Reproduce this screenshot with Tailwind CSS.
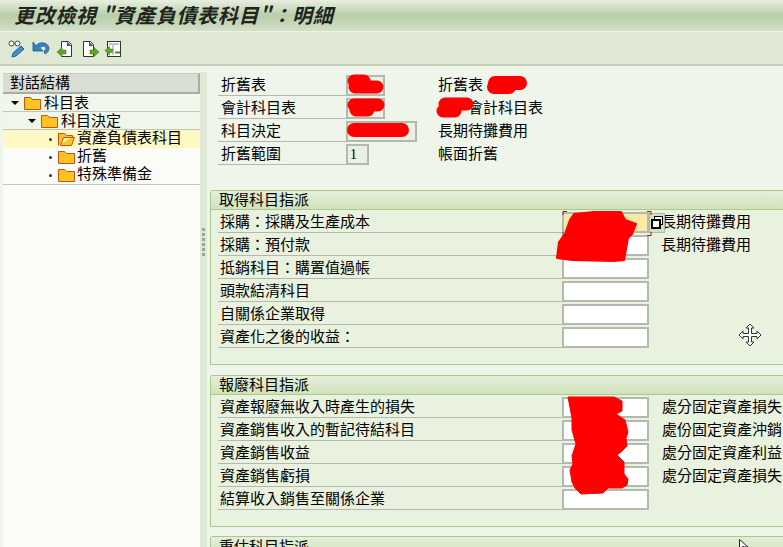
<!DOCTYPE html>
<html lang="zh-Hant">
<head>
  <meta charset="UTF-8" />
  <title>更改檢視</title>
  <script src="https://cdn.jsdelivr.net/npm/@tailwindcss/browser@4"></script>
</head>
<body class="relative w-[783px] h-[547px] overflow-hidden bg-[#eff5ea] text-[15px] leading-none text-black font-['Noto_Sans_CJK_TC','Liberation_Sans',sans-serif]">

  <!-- title bar -->
  <header class="h-[32px] pl-[14px] pb-[2px] flex items-center bg-gradient-to-b from-[#e8efe0] via-[#b9cdaa] to-[#d3e0c6] border-b border-[#eef3e8]">
    <h1 class="text-[20px] tracking-[0.7px] font-bold italic text-[#20241c] whitespace-nowrap">更改檢視 "資產負債表科目"&#xFF1A;明細</h1>
  </header>

  <!-- toolbar -->
  <div class="h-[34px] pl-[8px] pt-[1px] flex items-center bg-[#dfe8d3] border-b-2 border-[#c4d0b8]">
    <svg class="w-[18px] h-[18px]" viewBox="0 0 18 18">
      <circle cx="3.500" cy="3.500" r="2.500" fill="#fff" stroke="#444" />
      <circle cx="9.500" cy="3.500" r="2.500" fill="#fff" stroke="#444" />
      <path d="M6 3.500h1" stroke="#444" />
      <path d="M4 17l1-4 8-7 3 3-8 7z" fill="#3f8fd0" stroke="#1f5f98" />
    </svg>
    <svg class="w-[18px] h-[18px] ml-[6px]" viewBox="0 0 18 18">
      <path d="M4 6C7 1 16 2 17 8c0 3-2 5-4 6l-1-3c2-1 2-2 2-3-1-3-5-2-6 0l3 3-10 0 0-9z" fill="#2f86c6" stroke="#1c5a8e" stroke-width=".8" />
    </svg>
    <svg class="w-[18px] h-[18px] ml-[6px]" viewBox="0 0 18 18">
      <path d="M5.500 1.500h7l3 3v12h-10z" fill="#fff" stroke="#333" />
      <path d="M11 1.500l4.500 4.500h-4.500z" fill="#555" />
      <path d="M1 12l5-4.500v2.500h4v4h-4v2.500z" fill="#5ca81e" stroke="#3f7d12" stroke-width=".6" />
    </svg>
    <svg class="w-[18px] h-[18px] ml-[8px]" viewBox="0 0 18 18">
      <path d="M1.500 1.500h7l3 3v12h-10z" fill="#fff" stroke="#333" />
      <path d="M7 1.500l4.500 4.500h-4.500z" fill="#555" />
      <path d="M17 12l-5-4.500v2.500h-4v4h4v2.500z" fill="#5ca81e" stroke="#3f7d12" stroke-width=".6" />
    </svg>
    <svg class="w-[18px] h-[18px] ml-[4px]" viewBox="0 0 18 18">
      <rect x="3.500" y="1.500" width="13" height="15" fill="#fff" stroke="#333" />
      <path d="M10 4h5M5 4h3" stroke="#888" />
      <path d="M11 11.500h5v2h-5z" fill="#3f8f1a" />
      <path d="M9 3v12" stroke="#999" />
      <path d="M1 10.500l4.500-4v2.500h3v3.500h-3v2.500z" fill="#5ca81e" stroke="#3f7d12" stroke-width=".6" />
    </svg>
  </div>

  <div class="flex h-[481px]">
    <!-- tree panel -->
    <aside class="w-[197px] ml-[3px] mt-[7px] bg-[#fbfcf8] flex flex-col">
      <div class="h-[21px] pl-[7px] pb-[3px] flex items-center bg-[#d9ddd4] border-t border-r-2 border-b-2 border-[#a9aea4] border-t-[#c9cdc4]">對話結構</div>
      <div class="h-[18px] pl-[8px] flex items-center bg-[#f0f6ea] border-b border-[#bfc8b6]">
        <span class="w-0 h-0 mr-[5px] border-x-[4px] border-x-transparent border-t-[4px] border-t-black"></span>
        <svg class="w-[17px] h-[14px] mr-[3px]" viewBox="0 0 17 14"><path d="M.5 13.500v-12h6l2 2h8v10z" fill="#fdc31e" stroke="#c9501c" /></svg>
        <span class="-mt-[3px]">科目表</span>
      </div>
      <div class="h-[18px] pl-[25px] flex items-center bg-[#f0f6ea] border-b border-[#bfc8b6]">
        <span class="w-0 h-0 mr-[5px] border-x-[4px] border-x-transparent border-t-[4px] border-t-black"></span>
        <svg class="w-[17px] h-[14px] mr-[3px]" viewBox="0 0 17 14"><path d="M.5 13.500v-12h6l2 2h8v10z" fill="#fdc31e" stroke="#c9501c" /></svg>
        <span class="-mt-[3px]">科目決定</span>
      </div>
      <div class="h-[18px] pl-[46px] flex items-center bg-[#fdf8c4]">
        <span class="w-[3px] h-[3px] mr-[6px] bg-[#333] rounded-full"></span>
        <svg class="w-[17px] h-[14px] mr-[2px]" viewBox="0 0 17 14"><path d="M.5 13.500v-12h6l2 2h6v2h-9l-3 8h11l3-8h-3" fill="#fdc31e" stroke="#c9501c" /></svg>
        <span class="-mt-[5px]">資產負債表科目</span>
      </div>
      <div class="h-[18px] pl-[46px] flex items-center">
        <span class="w-[3px] h-[3px] mr-[6px] bg-[#333] rounded-full"></span>
        <svg class="w-[17px] h-[14px] mr-[2px]" viewBox="0 0 17 14"><path d="M.5 13.500v-12h6l2 2h8v10z" fill="#fdc31e" stroke="#c9501c" /></svg>
        <span class="-mt-[5px]">折舊</span>
      </div>
      <div class="h-[19px] pl-[46px] flex items-center border-b border-[#bfc8b6]">
        <span class="w-[3px] h-[3px] mr-[6px] bg-[#333] rounded-full"></span>
        <svg class="w-[17px] h-[14px] mr-[2px]" viewBox="0 0 17 14"><path d="M.5 13.500v-12h6l2 2h8v10z" fill="#fdc31e" stroke="#c9501c" /></svg>
        <span class="-mt-[5px]">特殊準備金</span>
      </div>
    </aside>

    <!-- splitter -->
    <div class="w-[7px] mt-[6px] bg-[#e0e9d7] flex flex-col items-center justify-center gap-[2px] pb-[135px]">
      <span class="w-[3px] h-[3px] bg-[#9aa396]"></span>
      <span class="w-[3px] h-[3px] bg-[#9aa396]"></span>
      <span class="w-[3px] h-[3px] bg-[#9aa396]"></span>
      <span class="w-[3px] h-[3px] bg-[#9aa396]"></span>
      <span class="w-[3px] h-[3px] bg-[#9aa396]"></span>
      <span class="w-[3px] h-[3px] bg-[#9aa396]"></span>
    </div>

    <!-- detail panel -->
    <main class="flex-1 min-w-0 pl-[3px] pt-[7px] overflow-hidden">
      <!-- header fields -->
      <div class="grid grid-cols-[128px_92px_1fr] pl-[8px] h-[92px] mb-[25px]">
        <div class="h-[23px] pl-[3px] pb-[2px] flex items-center border-b border-[#b4b9ae]">折舊表</div>
        <div class="flex items-end"><span class="block w-[39px] h-[21px] bg-[#eaf1e2] border-2 border-[#b4b9ae]"></span></div>
        <div class="h-[23px] pb-[2px] flex items-center">折舊表&#xFF1A;</div>
        <div class="h-[23px] pl-[3px] pb-[2px] flex items-center border-b border-[#b4b9ae]">會計科目表</div>
        <div class="flex items-end"><span class="block w-[39px] h-[21px] bg-[#eaf1e2] border-2 border-[#b4b9ae]"></span></div>
        <div class="h-[23px] pl-[30px] pb-[2px] flex items-center">會計科目表</div>
        <div class="h-[23px] pl-[3px] pb-[2px] flex items-center border-b border-[#b4b9ae]">科目決定</div>
        <div class="flex items-end"><span class="block w-[71px] h-[21px] bg-[#eaf1e2] border-2 border-[#b4b9ae]"></span></div>
        <div class="h-[23px] pb-[2px] flex items-center">長期待攤費用</div>
        <div class="h-[23px] pl-[3px] pb-[2px] flex items-center border-b border-[#b4b9ae]">折舊範圍</div>
        <div class="flex items-end"><span class="flex items-center pl-[2px] w-[23px] h-[21px] bg-[#eaf1e2] border-2 border-[#b4b9ae] text-[14px] font-['Liberation_Serif',serif]">1</span></div>
        <div class="h-[23px] pb-[2px] flex items-center">帳面折舊</div>
      </div>

      <!-- 取得科目指派 -->
      <section class="h-[175px] mb-[10px] bg-[#e9f2de] border border-r-0 border-[#a9c98d] rounded-tl-[3px]">
        <h2 class="h-[19px] pl-[8px] pb-[3px] flex items-center bg-gradient-to-b from-[#e5efd9] to-[#cfe3bc] border-b border-[#a9c98d] font-normal">取得科目指派</h2>
        <div class="grid grid-cols-[344px_87px_1fr] pl-[7px]">
          <div class="h-[23px] pl-[2px] pb-[2px] flex items-center border-b border-[#b4b9ae]">採購&#xFF1A;採購及生產成本</div>
          <div class="flex items-end"><span class="block w-[87px] h-[21px] bg-[#fde9a6] border-2 border-[#b4b9ae]"></span></div>
          <div class="relative h-[23px] pl-[12px] pb-[2px] flex items-center">
            <span class="relative">長期待攤費用</span>
            <span class="absolute left-0 top-[3px] w-[16px] h-[20px] bg-[#cfe3bc] border border-[#b4b9ae]">
              <span class="absolute left-[4px] top-[2px] block w-[9px] h-[9px] border border-black bg-white"></span>
              <span class="absolute left-[1px] top-[5px] block w-[10px] h-[10px] border-2 border-black bg-white"></span>
            </span>
          </div>
          <div class="h-[23px] pl-[2px] pb-[2px] flex items-center border-b border-[#b4b9ae]">採購&#xFF1A;預付款</div>
          <div class="flex items-end"><span class="block w-[87px] h-[21px] bg-white border-2 border-[#b4b9ae]"></span></div>
          <div class="h-[23px] pl-[12px] pb-[2px] flex items-center">長期待攤費用</div>
          <div class="h-[23px] pl-[2px] pb-[2px] flex items-center border-b border-[#b4b9ae]">抵銷科目&#xFF1A;購置值過帳</div>
          <div class="flex items-end"><span class="block w-[87px] h-[21px] bg-white border-2 border-[#b4b9ae]"></span></div>
          <div></div>
          <div class="h-[23px] pl-[2px] pb-[2px] flex items-center border-b border-[#b4b9ae]">頭款結清科目</div>
          <div class="flex items-end"><span class="block w-[87px] h-[21px] bg-white border-2 border-[#b4b9ae]"></span></div>
          <div></div>
          <div class="h-[23px] pl-[2px] pb-[2px] flex items-center border-b border-[#b4b9ae]">自關係企業取得</div>
          <div class="flex items-end"><span class="block w-[87px] h-[21px] bg-white border-2 border-[#b4b9ae]"></span></div>
          <div></div>
          <div class="h-[23px] pl-[2px] pb-[2px] flex items-center border-b border-[#b4b9ae]">資產化之後的收益&#xFF1A;</div>
          <div class="flex items-end"><span class="block w-[87px] h-[21px] bg-white border-2 border-[#b4b9ae]"></span></div>
          <div></div>
        </div>
      </section>

      <!-- 報廢科目指派 -->
      <section class="h-[152px] mb-[9px] bg-[#e9f2de] border border-r-0 border-[#a9c98d] rounded-tl-[3px]">
        <h2 class="h-[19px] pl-[8px] pb-[3px] flex items-center bg-gradient-to-b from-[#e5efd9] to-[#cfe3bc] border-b border-[#a9c98d] font-normal">報廢科目指派</h2>
        <div class="grid grid-cols-[344px_87px_1fr] pl-[7px]">
          <div class="h-[23px] pl-[2px] pb-[2px] flex items-center border-b border-[#b4b9ae]">資產報廢無收入時產生的損失</div>
          <div class="flex items-end"><span class="block w-[87px] h-[21px] bg-white border-2 border-[#b4b9ae]"></span></div>
          <div class="h-[23px] pl-[13px] pb-[2px] flex items-center whitespace-nowrap">處分固定資產損失</div>
          <div class="h-[23px] pl-[2px] pb-[2px] flex items-center border-b border-[#b4b9ae]">資產銷售收入的暫記待結科目</div>
          <div class="flex items-end"><span class="block w-[87px] h-[21px] bg-white border-2 border-[#b4b9ae]"></span></div>
          <div class="h-[23px] pl-[13px] pb-[2px] flex items-center whitespace-nowrap">處份固定資產沖銷</div>
          <div class="h-[23px] pl-[2px] pb-[2px] flex items-center border-b border-[#b4b9ae]">資產銷售收益</div>
          <div class="flex items-end"><span class="block w-[87px] h-[21px] bg-white border-2 border-[#b4b9ae]"></span></div>
          <div class="h-[23px] pl-[13px] pb-[2px] flex items-center whitespace-nowrap">處分固定資產利益</div>
          <div class="h-[23px] pl-[2px] pb-[2px] flex items-center border-b border-[#b4b9ae]">資產銷售虧損</div>
          <div class="flex items-end"><span class="block w-[87px] h-[21px] bg-white border-2 border-[#b4b9ae]"></span></div>
          <div class="h-[23px] pl-[13px] pb-[2px] flex items-center whitespace-nowrap">處分固定資產損失</div>
          <div class="h-[23px] pl-[2px] pb-[2px] flex items-center border-b border-[#b4b9ae]">結算收入銷售至關係企業</div>
          <div class="flex items-end"><span class="block w-[87px] h-[21px] bg-white border-2 border-[#b4b9ae]"></span></div>
          <div></div>
        </div>
      </section>

      <!-- 重估科目指派 -->
      <section class="bg-[#e9f2de] border border-r-0 border-[#a9c98d] rounded-tl-[3px]">
        <h2 class="h-[19px] pl-[8px] pb-[3px] flex items-center bg-gradient-to-b from-[#e5efd9] to-[#cfe3bc] font-normal">重估科目指派</h2>
      </section>
    </main>
  </div>

  <!-- red marker scribbles, focus corners and mouse pointers lying over the form -->
  <svg class="absolute inset-0 pointer-events-none" width="783" height="547" viewBox="0 0 783 547">
    <g fill="none" stroke="#ff0000" stroke-linecap="round" stroke-linejoin="round">
      <path d="M354 81l10 0M355 87l22 0" stroke-width="13" />
      <path d="M354 105l24 0M356 110l12 0" stroke-width="13" />
      <path d="M354 130l48 0" stroke-width="14" />
      <path d="M495 83l25 0M494 87l15 0" stroke-width="14" />
      <path d="M445 104l22 0M443 111l12 0" stroke-width="13" />
    </g>
    <path d="M574 214l20-2 27 0 4 8 11 4-4 10-4 4-4 22-10 1-42-1-15-2 2-16 6-8 5-14z" fill="#ff0000" stroke="#ff0000" stroke-width="2" stroke-linejoin="round" />
    <path d="M568 397l46 0 8 4 0 10-6 3 9 6 3 12-2 6 1 8-6 6-4 3 7 7 0 12 4 5-1 6-5 3-14 0-5 5-22 1-6-6-3-6-2-12 3-6-1-8 4-12-4-14 0-12z" fill="#ff0000" stroke="#ff0000" stroke-linejoin="round" />
    <path d="M563 215v-3.500h4M647 211.500h4v3.500M563 232v3.500h4M647 235.500h4v-3.500" fill="none" stroke="#a01818" />
    <!-- move cursor -->
    <path d="M750 324l4 4h-2.500v5.500h5.500v-2.500l4 4-4 4v-2.500h-5.500v5.500h2.500l-4 4-4-4h2.500v-5.500h-5.500v2.500l-4-4 4-4v2.500h5.500v-5.500h-2.500z" fill="#fff" stroke="#333" />
    <!-- arrow cursor -->
    <path d="M739.500 539.500v10l3-3 6 1z" fill="#fff" stroke="#222" />
  </svg>
</body>
</html>
